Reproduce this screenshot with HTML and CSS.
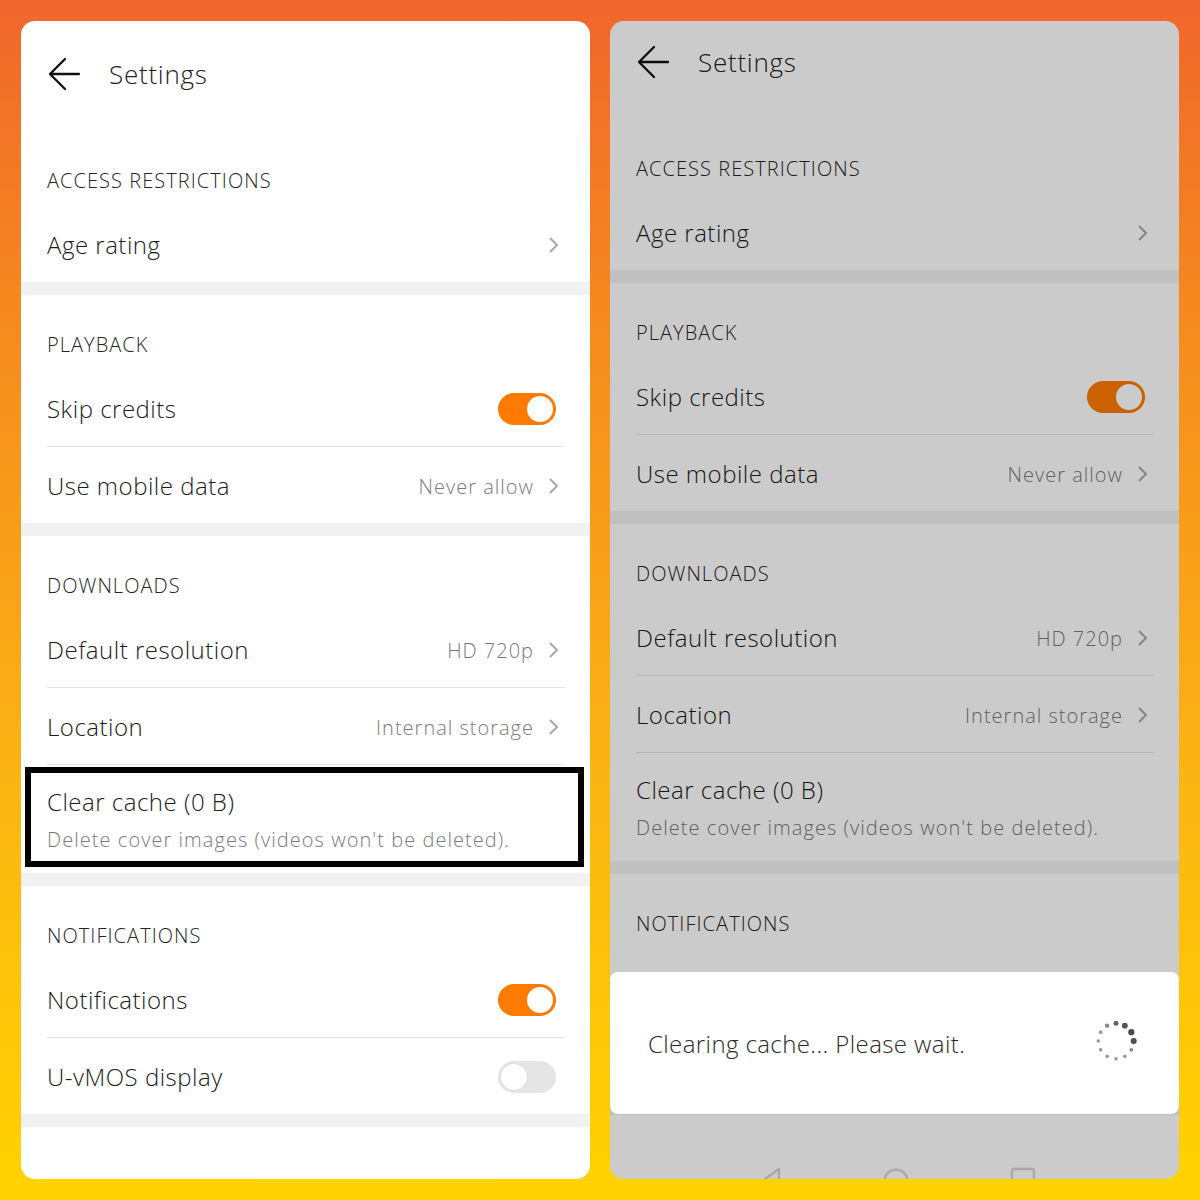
FILE: index.html
```html
<!DOCTYPE html>
<html lang="en">
<head>
<meta charset="utf-8">
<title>Settings</title>
<link rel="stylesheet" href="styles.css">
</head>
<body>
<div class="stage">
  <!-- LEFT PANEL -->
  <div class="panel">
    <div class="screen">
      <div class="header">
        <svg class="back" width="34" height="34" viewBox="0 0 34 34"><path d="M32 17H3M18 2L3 17L18 32" fill="none" stroke="#111" stroke-width="2.3" stroke-linecap="round" stroke-linejoin="round"/></svg>
        <span class="header-title">Settings</span>
      </div>
      <div class="section">
        <div class="section-title">ACCESS RESTRICTIONS</div>
        <div class="row"><span class="row-label">Age rating</span><span class="row-end"><svg class="chev" width="11" height="18" viewBox="0 0 11 18"><path d="M2 2L9 9L2 16" fill="none" stroke="#a8a8a8" stroke-width="2"/></svg></span></div>
      </div>
      <div class="gap"></div>
      <div class="section">
        <div class="section-title">PLAYBACK</div>
        <div class="row"><span class="row-label">Skip credits</span><span class="toggle on"><span class="knob"></span></span></div>
        <div class="divider"></div>
        <div class="row"><span class="row-label">Use mobile data</span><span class="row-end"><span class="value">Never allow</span><svg class="chev" width="11" height="18" viewBox="0 0 11 18"><path d="M2 2L9 9L2 16" fill="none" stroke="#a8a8a8" stroke-width="2"/></svg></span></div>
      </div>
      <div class="gap"></div>
      <div class="section">
        <div class="section-title">DOWNLOADS</div>
        <div class="row"><span class="row-label">Default resolution</span><span class="row-end"><span class="value">HD 720p</span><svg class="chev" width="11" height="18" viewBox="0 0 11 18"><path d="M2 2L9 9L2 16" fill="none" stroke="#a8a8a8" stroke-width="2"/></svg></span></div>
        <div class="divider"></div>
        <div class="row"><span class="row-label">Location</span><span class="row-end"><span class="value">Internal storage</span><svg class="chev" width="11" height="18" viewBox="0 0 11 18"><path d="M2 2L9 9L2 16" fill="none" stroke="#a8a8a8" stroke-width="2"/></svg></span></div>
        <div class="divider"></div>
        <div class="row-two highlight">
          <div class="row-label">Clear cache (0 B)</div>
          <div class="row-sub">Delete cover images (videos won't be deleted).</div>
        </div>
      </div>
      <div class="gap"></div>
      <div class="section">
        <div class="section-title">NOTIFICATIONS</div>
        <div class="row"><span class="row-label">Notifications</span><span class="toggle on"><span class="knob"></span></span></div>
        <div class="divider"></div>
        <div class="row"><span class="row-label">U-vMOS display</span><span class="toggle off"><span class="knob"></span></span></div>
      </div>
      <div class="gap"></div>
    </div>
  </div>

  <!-- RIGHT PANEL -->
  <div class="panel">
    <div class="screen screen-shifted">
      <div class="header">
        <svg class="back" width="34" height="34" viewBox="0 0 34 34"><path d="M32 17H3M18 2L3 17L18 32" fill="none" stroke="#111" stroke-width="2.3" stroke-linecap="round" stroke-linejoin="round"/></svg>
        <span class="header-title">Settings</span>
      </div>
      <div class="section">
        <div class="section-title">ACCESS RESTRICTIONS</div>
        <div class="row"><span class="row-label">Age rating</span><span class="row-end"><svg class="chev" width="11" height="18" viewBox="0 0 11 18"><path d="M2 2L9 9L2 16" fill="none" stroke="#a8a8a8" stroke-width="2"/></svg></span></div>
      </div>
      <div class="gap"></div>
      <div class="section">
        <div class="section-title">PLAYBACK</div>
        <div class="row"><span class="row-label">Skip credits</span><span class="toggle on"><span class="knob"></span></span></div>
        <div class="divider"></div>
        <div class="row"><span class="row-label">Use mobile data</span><span class="row-end"><span class="value">Never allow</span><svg class="chev" width="11" height="18" viewBox="0 0 11 18"><path d="M2 2L9 9L2 16" fill="none" stroke="#a8a8a8" stroke-width="2"/></svg></span></div>
      </div>
      <div class="gap"></div>
      <div class="section">
        <div class="section-title">DOWNLOADS</div>
        <div class="row"><span class="row-label">Default resolution</span><span class="row-end"><span class="value">HD 720p</span><svg class="chev" width="11" height="18" viewBox="0 0 11 18"><path d="M2 2L9 9L2 16" fill="none" stroke="#a8a8a8" stroke-width="2"/></svg></span></div>
        <div class="divider"></div>
        <div class="row"><span class="row-label">Location</span><span class="row-end"><span class="value">Internal storage</span><svg class="chev" width="11" height="18" viewBox="0 0 11 18"><path d="M2 2L9 9L2 16" fill="none" stroke="#a8a8a8" stroke-width="2"/></svg></span></div>
        <div class="divider"></div>
        <div class="row-two">
          <div class="row-label">Clear cache (0 B)</div>
          <div class="row-sub">Delete cover images (videos won't be deleted).</div>
        </div>
      </div>
      <div class="gap"></div>
      <div class="section">
        <div class="section-title">NOTIFICATIONS</div>
        <div class="row"><span class="row-label covered">Notifications</span><span class="toggle on"><span class="knob"></span></span></div>
        <div class="divider"></div>
        <div class="row"><span class="row-label covered">U-vMOS display</span><span class="toggle off"><span class="knob"></span></span></div>
      </div>
      <div class="gap"></div>
    </div>
    <div class="scrim"></div>
    <div class="navbar">
      <svg width="20" height="24" viewBox="0 0 20 24"><path d="M17 2L3 12L17 22Z" fill="none" stroke="#a9a9a9" stroke-width="2.4" stroke-linejoin="round"/></svg>
      <svg width="28" height="28" viewBox="0 0 28 28"><circle cx="14" cy="14" r="11.5" fill="none" stroke="#a9a9a9" stroke-width="2.4"/></svg>
      <svg width="26" height="26" viewBox="0 0 26 26"><rect x="2" y="2" width="22" height="22" rx="2" fill="none" stroke="#a9a9a9" stroke-width="2.4"/></svg>
    </div>
    <div class="dialog">
      <span class="dialog-text">Clearing cache... Please wait.</span>
      <svg class="spinner" width="44" height="44" viewBox="0 0 44 44">
        <circle cx="22" cy="4.3" r="2.5" fill="#666"/>
        <circle cx="30.85" cy="6.67" r="2.9" fill="#555"/>
        <circle cx="37.33" cy="13.15" r="3.1" fill="#484848"/>
        <circle cx="39.7" cy="22" r="3" fill="#4f4f4f"/>
        <circle cx="37.33" cy="30.85" r="1.9" fill="#8a8a8a"/>
        <circle cx="30.85" cy="37.33" r="1.8" fill="#999"/>
        <circle cx="22" cy="39.7" r="1.8" fill="#999"/>
        <circle cx="13.15" cy="37.33" r="1.8" fill="#999"/>
        <circle cx="6.67" cy="30.85" r="1.8" fill="#999"/>
        <circle cx="4.3" cy="22" r="1.8" fill="#999"/>
        <circle cx="6.67" cy="13.15" r="1.9" fill="#999"/>
        <circle cx="13.15" cy="6.67" r="2.2" fill="#8a8a8a"/>
      </svg>
    </div>
  </div>
</div>
</body>
</html>
```

FILE: styles.css
```css
* { box-sizing: border-box; }

html, body {
  margin: 0;
  padding: 0;
}

body {
  width: 1200px;
  height: 1200px;
  background: linear-gradient(to bottom, #f0662c 0%, #f5881f 25%, #fbb513 65%, #ffd300 100%);
  font-family: "Open Sans", "Noto Sans", "Liberation Sans", sans-serif;
  font-weight: 300;
  color: #1c1c1c;
  overflow: hidden;
}

.stage {
  display: flex;
  gap: 20px;
  padding: 21px;
}

.panel {
  position: relative;
  width: 569px;
  height: 1158px;
  background: #ffffff;
  border-radius: 14px;
  overflow: hidden;
}

.screen {
  display: flex;
  flex-direction: column;
}

.screen-shifted {
  margin-top: -12px;
}

.header {
  height: 110px;
  display: flex;
  align-items: flex-start;
  padding-top: 36px;
  padding-left: 26px;
}

.back {
  display: block;
}

.header-title {
  margin-left: 28px;
  font-size: 26px;
  line-height: 34px;
  letter-spacing: 0.75px;
  color: #222;
}

.section {
  display: flex;
  flex-direction: column;
  background: #fff;
}

.section-title {
  height: 75px;
  padding: 36px 26px 0;
  font-size: 20px;
  line-height: 28px;
  color: #262626;
  letter-spacing: 1.05px;
}

.row {
  height: 76px;
  display: flex;
  align-items: center;
  justify-content: space-between;
  padding: 2px 31px 0 26px;
}

.row-label {
  font-size: 24px;
  line-height: 30px;
  letter-spacing: 0.5px;
  color: #1c1c1c;
}

.covered {
  visibility: hidden;
}

.row-end {
  display: flex;
  align-items: center;
  gap: 14px;
}

.value {
  font-size: 20px;
  letter-spacing: 1px;
  color: #7a7a7a;
}

.chev {
  display: block;
}

.divider {
  height: 1px;
  margin: 0 25px 0 26px;
  background: #e4e4e4;
}

.row-two {
  display: flex;
  flex-direction: column;
  padding: 22px 26px 0;
  height: 108px;
}

.row-sub {
  margin-top: 9px;
  font-size: 20px;
  line-height: 28px;
  letter-spacing: 1.05px;
  color: #7a7a7a;
}

.highlight {
  position: relative;
}

.highlight::after {
  content: "";
  position: absolute;
  left: 4px;
  right: 6px;
  top: 2px;
  bottom: 6px;
  border: 6px solid #000;
}

.gap {
  height: 13px;
  background: #f1f1f1;
  flex: none;
}

.toggle {
  position: relative;
  width: 58px;
  height: 32px;
  border-radius: 16px;
  margin-right: 3px;
  flex: none;
}

.toggle.on { background: #ff7a00; }
.toggle.off { background: #e5e5e5; }

.knob {
  position: absolute;
  top: 3px;
  width: 26px;
  height: 26px;
  border-radius: 50%;
  background: #fff;
}

.toggle.on .knob { right: 3px; }
.toggle.off .knob { left: 3px; box-shadow: 0 0 0 0.5px #d6d6d6; }

.scrim {
  position: absolute;
  inset: 0;
  background: rgba(0, 0, 0, 0.204);
}

.navbar {
  position: absolute;
  left: 0;
  right: 0;
  top: 1146px;
  display: flex;
  justify-content: center;
  gap: 100px;
  padding-left: 8px;
}

.dialog {
  position: absolute;
  left: 0;
  right: 0;
  top: 951px;
  height: 142px;
  background: #fff;
  border-radius: 8px;
  display: flex;
  align-items: center;
  justify-content: space-between;
  padding: 0 41px 0 38px;
}

.dialog-text {
  font-size: 24px;
  letter-spacing: 0.4px;
  color: #2a2a2a;
}

.spinner {
  display: block;
  margin-top: -4px;
}
```
